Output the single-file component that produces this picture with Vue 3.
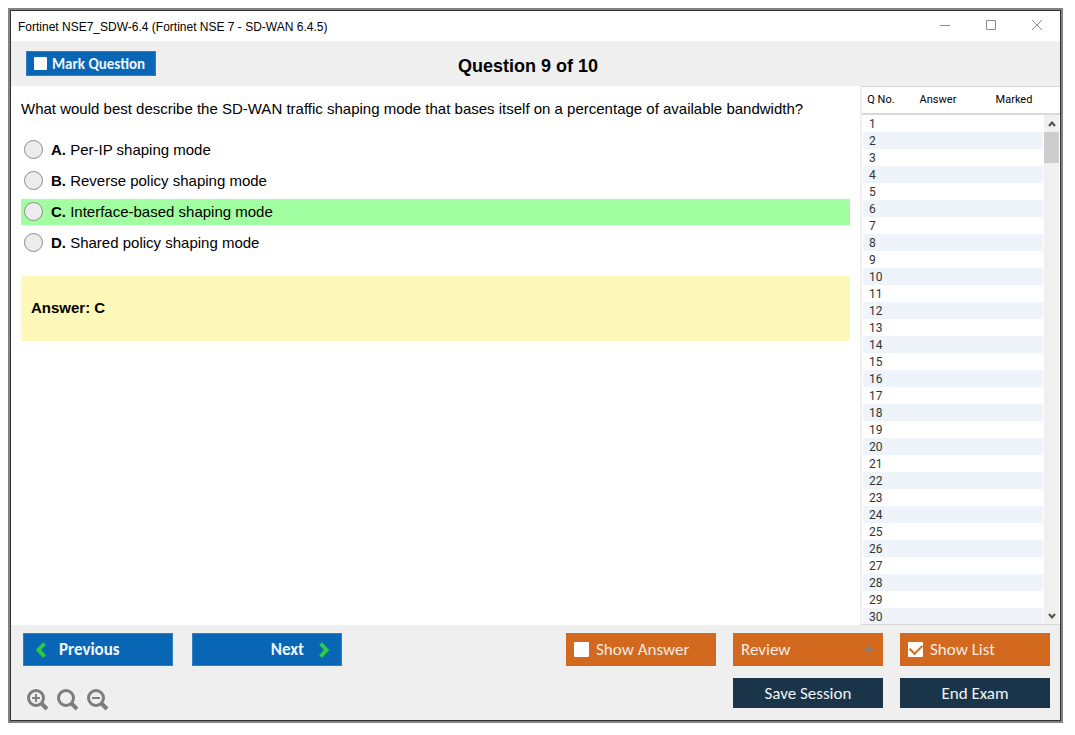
<script setup>
import { ref } from 'vue'

const title = 'Fortinet NSE7_SDW-6.4 (Fortinet NSE 7 - SD-WAN 6.4.5)'
const options = [
  { key: 'A', text: 'Per-IP shaping mode' },
  { key: 'B', text: 'Reverse policy shaping mode' },
  { key: 'C', text: 'Interface-based shaping mode' },
  { key: 'D', text: 'Shared policy shaping mode' },
]
const correct = 'C'
const chosen = ref('')
const marked = ref(false)
const showAnswer = ref(false)
const showList = ref(true)
const rows = 30
</script>

<template>
  <div class="page">
    <div class="window">
      <header class="titlebar">
        <span class="caption">{{ title }}</span>
        <div class="controls">
          <button type="button" aria-label="Minimize">
            <svg width="12" height="12" viewBox="0 0 12 12"><path d="M1 5.500h10" /></svg>
          </button>
          <button type="button" aria-label="Maximize">
            <svg width="12" height="12" viewBox="0 0 12 12"><path d="M1.500 0.500h9v9h-9z" /></svg>
          </button>
          <button type="button" aria-label="Close">
            <svg width="12" height="12" viewBox="0 0 12 12"><path d="M1 0l10 10M11 0L1 10" /></svg>
          </button>
        </div>
      </header>

      <div class="heading">
        <label class="btn blue mark">
          <input v-model="marked" type="checkbox" />
          <span>Mark Question</span>
        </label>
        <h1>Question 9 of 10</h1>
      </div>

      <main class="body">
        <section class="question">
          <p class="prompt">
            What would best describe the SD-WAN traffic shaping mode that bases itself on a percentage of available bandwidth?
          </p>
          <div class="options">
            <label v-for="o in options" :key="o.key" class="option" :class="{ correct: o.key === correct }">
              <input v-model="chosen" type="radio" name="answer" :value="o.key" />
              <span><b>{{ o.key }}.</b> {{ o.text }}</span>
            </label>
          </div>
          <div class="answer">Answer: {{ correct }}</div>
        </section>

        <aside class="list">
          <div class="scroller">
            <table>
              <thead>
                <tr>
                  <th class="no">Q No.</th>
                  <th class="ans">Answer</th>
                  <th class="marked">Marked</th>
                </tr>
              </thead>
              <tbody>
                <tr v-for="n in rows" :key="n">
                  <td>{{ n }}</td>
                  <td></td>
                  <td></td>
                </tr>
              </tbody>
            </table>
          </div>
          <div class="scrollbar">
            <button type="button" aria-label="Scroll up">
              <svg width="8" height="8" viewBox="0 0 8 8"><path d="M1 6l3-3.500L7 6" /></svg>
            </button>
            <div class="thumb"></div>
            <button type="button" class="down" aria-label="Scroll down">
              <svg width="8" height="8" viewBox="0 0 8 8"><path d="M1 2l3 3.500L7 2" /></svg>
            </button>
          </div>
        </aside>
      </main>

      <footer class="footer">
        <div class="left">
          <div class="nav">
            <button type="button" class="btn blue prev">
              <svg width="10" height="16" viewBox="0 0 10 16"><path d="M8.500 1.500L2.500 8L8.500 14.500" /></svg>
              <span>Previous</span>
            </button>
            <button type="button" class="btn blue next">
              <span>Next</span>
              <svg width="10" height="16" viewBox="0 0 10 16"><path d="M1.500 1.500L7.500 8L1.500 14.500" /></svg>
            </button>
          </div>
          <div class="zoom">
            <button type="button" aria-label="Zoom in">
              <svg width="22" height="22" viewBox="0 0 22 22">
                <circle cx="9" cy="9" r="7.500" />
                <path class="handle" d="M14.500 14.500L20 20" />
                <path class="sign" d="M5 9h8M9 5v8" />
              </svg>
            </button>
            <button type="button" aria-label="Reset zoom">
              <svg width="22" height="22" viewBox="0 0 22 22">
                <circle cx="9" cy="9" r="7.500" />
                <path class="handle" d="M14.500 14.500L20 20" />
              </svg>
            </button>
            <button type="button" aria-label="Zoom out">
              <svg width="22" height="22" viewBox="0 0 22 22">
                <circle cx="9" cy="9" r="7.500" />
                <path class="handle" d="M14.500 14.500L20 20" />
                <path class="sign" d="M5 9h8" />
              </svg>
            </button>
          </div>
        </div>

        <div class="right">
          <label class="btn orange">
            <input v-model="showAnswer" type="checkbox" />
            <span>Show Answer</span>
          </label>
          <div class="review">
            <select class="btn orange" aria-label="Review">
              <option>Review</option>
            </select>
            <svg width="11" height="6" viewBox="0 0 11 6"><path d="M0 6L5.500 0L11 6z" /></svg>
          </div>
          <label class="btn orange">
            <input v-model="showList" type="checkbox" />
            <span>Show List</span>
          </label>
          <button type="button" class="btn navy save">Save Session</button>
          <button type="button" class="btn navy">End Exam</button>
        </div>
      </footer>
    </div>
  </div>
</template>

<style>
body {
  margin: 0;
  background: #fff;
}
</style>

<style scoped>
* {
  box-sizing: border-box;
}
.page {
  display: flex;
  min-height: 100vh;
  padding: 8px 12px 12px 8px;
  font-family: "Liberation Sans", Arial, sans-serif;
  color: #000;
}
.window {
  flex: 1;
  display: flex;
  flex-direction: column;
  min-width: 0;
  border: 2px solid #838383;
  box-shadow: inset 0 0 0 1px #333336;
  padding: 1px;
}
button {
  border: 0;
  margin: 0;
  padding: 0;
  background: none;
  font: inherit;
}
svg {
  display: block;
  fill: none;
}
.titlebar {
  display: flex;
  justify-content: space-between;
  align-items: center;
  height: 30px;
  padding-left: 7px;
  font-size: 12px;
}
.caption {
  padding-top: 1px;
}
.controls {
  display: flex;
}
.controls button {
  display: grid;
  place-items: center;
  width: 46px;
  height: 30px;
}
.controls svg {
  stroke: #8c8c8c;
}
.heading {
  display: grid;
  grid-template-columns: 1fr auto 1fr;
  align-items: center;
  height: 45px;
  padding: 0 30px 0 15px;
  background: #efefef;
}
h1 {
  margin: 0;
  padding-top: 4px;
  font-size: 18px;
  line-height: 20px;
}
.btn {
  display: flex;
  align-items: center;
  height: 33px;
  font-family: Carlito, "Open Sans", sans-serif;
  font-size: 17px;
  color: #f7ece2;
}
.blue {
  background: #0966b5;
  box-shadow: inset 0 0 0 1px #2f7fc2;
  color: #f0f6fc;
  font-weight: 700;
}
.orange {
  width: 100%;
  padding: 0 8px;
  gap: 7px;
  background: #d2691e;
}
.navy {
  justify-content: center;
  height: 30px;
  background: #1a344a;
  color: #f2f4f6;
}
.mark {
  justify-self: start;
  width: 130px;
  height: 25px;
  padding-left: 8px;
  gap: 5px;
  font-size: 15px;
}
input[type="checkbox"] {
  appearance: none;
  flex: none;
  display: grid;
  place-items: center;
  width: 15px;
  height: 15px;
  margin: 0;
  border-radius: 1px;
  background: #fff;
}
.mark input[type="checkbox"] {
  width: 13px;
  height: 13px;
}
input[type="checkbox"]:checked::before {
  content: "";
  width: 10px;
  height: 6px;
  margin-bottom: 3px;
  border: solid #d2691e;
  border-width: 0 0 2px 2px;
  transform: rotate(-45deg);
}
.body {
  flex: 1;
  display: grid;
  grid-template-columns: 1fr 200px;
  min-height: 0;
}
.question {
  padding: 12px 10px 0;
  font-size: 15px;
}
.prompt {
  margin: 0 0 17px;
  line-height: 22px;
}
.options {
  display: grid;
  gap: 5px;
}
.option {
  display: flex;
  align-items: center;
  gap: 8px;
  height: 26px;
  padding: 0 0 2px 3px;
}
.correct {
  background: #a1ffa1;
}
input[type="radio"] {
  appearance: none;
  width: 19px;
  height: 19px;
  margin: 0;
  border: 1px solid #8c8c8c;
  border-radius: 50%;
  background: #ececec;
}
input[type="radio"]:checked {
  box-shadow: inset 0 0 0 4px #ececec;
  background: #333;
}
.answer {
  display: flex;
  align-items: center;
  height: 65px;
  margin-top: 20px;
  padding: 0 0 2px 10px;
  background: #fef8ba;
  font-weight: 700;
}
.list {
  display: grid;
  grid-template-columns: 1fr 17px;
  border-left: 2px solid #f0f0f0;
  border-top: 1px solid #d6d6d6;
  border-bottom: 1px solid #d6d6d6;
  height: 539px;
  overflow: hidden;
}
.scroller {
  grid-area: 1 / 1 / 2 / 3;
  min-height: 0;
  overflow: hidden;
}
table {
  width: 100%;
  border-collapse: separate;
  border-spacing: 0;
  table-layout: fixed;
  font-family: Roboto, sans-serif;
  font-size: 12px;
}
th {
  height: 28px;
  padding: 0 0 1px;
  border-bottom: 2px solid #d9d9d9;
  font-weight: 400;
  font-size: 11px;
  text-align: center;
}
.no {
  width: 38px;
}
.ans {
  width: 76px;
}
.marked {
  padding-right: 8px;
}
td {
  height: 17px;
  padding: 1px 0 0 6px;
  line-height: 16px;
  color: #333;
}
td:first-child {
  border-left: 1px solid #fff;
}
tbody tr:nth-child(even) td {
  background: #eef4f9;
}
.scrollbar {
  grid-area: 1 / 2 / 2 / 3;
  display: flex;
  flex-direction: column;
  margin-top: 28px;
  background: #f0f0f0;
  border: solid #fff;
  border-width: 0 1px;
}
.scrollbar button {
  display: grid;
  place-items: center;
  height: 17px;
}
.scrollbar svg {
  stroke: #505050;
  stroke-width: 2;
}
.thumb {
  height: 31px;
  background: #cdcdcd;
}
.down {
  margin-top: auto;
}
.footer {
  display: flex;
  justify-content: space-between;
  height: 95px;
  padding: 8px 10px 0 12px;
  background: #efefef;
}
.nav {
  display: flex;
  gap: 19px;
}
.nav .btn {
  width: 150px;
  padding: 0 13px;
}
.nav svg {
  stroke: #2ecc40;
  stroke-width: 4;
}
.prev {
  gap: 13px;
}
.next {
  justify-content: flex-end;
  gap: 15px;
}
.zoom {
  display: flex;
  gap: 8px;
  padding: 23px 0 0 4px;
}
.zoom svg {
  stroke: #7d7d7d;
  stroke-width: 3;
}
.zoom .handle {
  stroke-width: 4;
}
.zoom .sign {
  stroke-width: 2;
}
.right {
  display: grid;
  grid-template-columns: repeat(3, 150px);
  column-gap: 17px;
  row-gap: 12px;
  align-content: start;
}
.review {
  position: relative;
}
.review svg {
  position: absolute;
  right: 9px;
  top: 13px;
  fill: #8a8078;
  pointer-events: none;
}
select {
  appearance: none;
  border: 0;
  border-radius: 0;
  margin: 0;
}
.save {
  grid-column: 2;
}
</style>
